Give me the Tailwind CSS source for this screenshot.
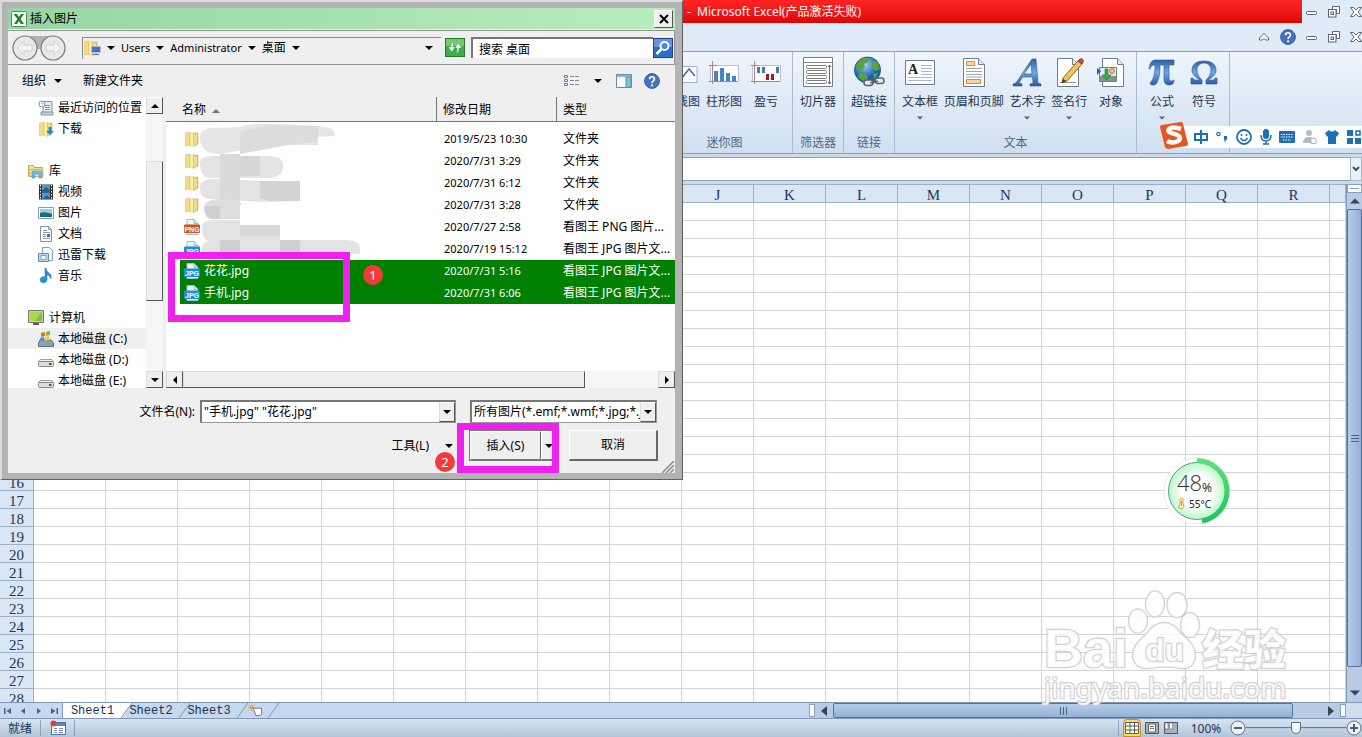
<!DOCTYPE html>
<html lang="zh-CN">
<head>
<meta charset="utf-8">
<meta name="viewport" content="width=device-width, initial-scale=1">
<title>Microsoft Excel</title>
<script src="https://cdn.jsdelivr.net/npm/@tailwindcss/browser@4"></script>
</head>
<body class="h-screen overflow-hidden bg-white font-['Noto_Sans','Noto_Sans_CJK_SC',sans-serif] text-xs leading-4 text-black">

<!-- Shared icon symbols -->
<svg class="absolute size-0">
  <defs>
    <linearGradient id="gold" x1="0" x2="1"><stop offset="0" stop-color="#f9eaa0"/><stop offset="1" stop-color="#dcb844"/></linearGradient>
    <linearGradient id="blueGlyph" x1="0" y1="0" x2="0" y2="1"><stop offset="0" stop-color="#2d5fa8"/><stop offset=".5" stop-color="#6fa8e6"/><stop offset="1" stop-color="#2c5ca3"/></linearGradient>
    <linearGradient id="ring" x1="0" y1="0" x2="0" y2="1"><stop offset="0" stop-color="#5fe07c"/><stop offset="1" stop-color="#1fc45a"/></linearGradient>
    <radialGradient id="gaugeFill"><stop offset=".55" stop-color="#ffffff"/><stop offset="1" stop-color="#b9f6c6"/></radialGradient>
    <radialGradient id="globe" cx=".4" cy=".3"><stop offset="0" stop-color="#9fd4f7"/><stop offset="1" stop-color="#1c5fae"/></radialGradient>
  </defs>
  <symbol id="caret" viewBox="0 0 8 4"><path d="M0 0h8L4 4z" fill="currentColor"/></symbol>
  <symbol id="folder" viewBox="0 0 16 16"><path d="M1.500 2 6 1v13l-4.500 1z" fill="#f2dc85" stroke="#d8bb5c" stroke-width=".5"/><path d="M6 2.500 9.500 1.500v13L6 15z" fill="#fdf0ae" stroke="#d8bb5c" stroke-width=".5"/><path d="M9.500 2H14v11l-4.500 2.500z" fill="url(#gold)" stroke="#c9a640" stroke-width=".5"/><path d="M12 4h1v8h-1z" fill="#f8e79c"/></symbol>
  <symbol id="png" viewBox="0 0 16 16"><path d="M3 .5h7l4 4v11H3z" fill="#eef6fc" stroke="#9cbdd6"/><path d="M10 .5v4h4" fill="#cfe3f2" stroke="#9cbdd6"/><rect y="5.500" width="16" height="8.500" rx="1" fill="#c9571f"/><text x="8" y="13" text-anchor="middle" font-family="Liberation Sans" font-weight="bold" font-size="7" fill="#fff">PNG</text></symbol>
  <symbol id="jpg" viewBox="0 0 16 16"><path d="M3 .5h7l4 4v11H3z" fill="#eef6fc" stroke="#9cbdd6"/><path d="M10 .5v4h4" fill="#cfe3f2" stroke="#9cbdd6"/><rect y="5.500" width="16" height="8.500" rx="1" fill="#1c8ed6"/><text x="8" y="13" text-anchor="middle" font-family="Liberation Sans" font-weight="bold" font-size="7" fill="#fff">JPG</text></symbol>
  <symbol id="drive" viewBox="0 0 16 16"><path d="M2 7.500h12l1.500 2.500H.5z" fill="#f2f2f2" stroke="#a0a0a0"/><rect x=".5" y="9.500" width="15" height="5" rx="1" fill="#d9dbdc" stroke="#8a8a8a"/><path d="M11 11h2.500v2H11z" fill="#4b5b4b"/></symbol>
  <symbol id="min" viewBox="0 0 12 12"><rect x=".5" y="5.500" width="10" height="3" rx="1" fill="#fff" stroke="#5b6573"/></symbol>
  <symbol id="restore" viewBox="0 0 12 12"><path d="M4.500.5h7v7h-3v-4h-4z" fill="#fff" stroke="#5b6573"/><rect x=".5" y="3.500" width="7.500" height="7.500" fill="#fff" stroke="#5b6573"/><rect x="3" y="6" width="2.500" height="2.500" fill="#fff" stroke="#5b6573"/></symbol>
  <symbol id="close" viewBox="0 0 12 12"><path d="M.5 1.500h3L6 4l2.500-2.500h3L8 6l3.500 4.500h-3L6 8l-2.500 2.500h-3L4 6z" fill="#fff" stroke="#5b6573"/></symbol>
  <symbol id="help" viewBox="0 0 16 16"><circle cx="8" cy="8" r="7.400" fill="#4173c4" stroke="#3a5f9f"/><path d="M5.600 6.200C5.600 3 10.600 3 10.400 6c0 1.800-2.300 1.900-2.300 4" fill="none" stroke="#fff" stroke-width="1.700"/><circle cx="8.100" cy="12.300" r="1.100" fill="#fff"/></symbol>
</svg>

<div class="flex h-screen min-w-0 flex-col bg-[#dfebf7] text-[#1c3557]">

  <!-- Title bar -->
  <header class="flex h-[23px] shrink-0">
    <div class="flex flex-1 items-center bg-linear-to-b from-[#ff2424] to-[#e00404] pl-[687px] text-white">-&nbsp; Microsoft Excel(产品激活失败)</div>
    <div class="flex w-[60px] items-center justify-end gap-2.5">
      <button aria-label="最小化"><svg class="size-3"><use href="#min"/></svg></button>
      <button aria-label="还原"><svg class="size-3"><use href="#restore"/></svg></button>
      <button aria-label="关闭"><svg class="size-3"><use href="#close"/></svg></button>
    </div>
  </header>

  <!-- Workbook controls -->
  <div class="flex h-7 shrink-0 items-center justify-end gap-2.5">
    <button aria-label="折叠功能区"><svg class="size-3" viewBox="0 0 12 12"><path d="M1.500 7 6 2.500 10.500 7v2h-3L6 7.500 4.500 9h-3z" fill="#fff" stroke="#5b6573"/></svg></button>
    <button aria-label="帮助"><svg class="size-4"><use href="#help"/></svg></button>
    <button aria-label="最小化工作簿"><svg class="size-3"><use href="#min"/></svg></button>
    <button aria-label="还原工作簿"><svg class="size-3"><use href="#restore"/></svg></button>
    <button aria-label="关闭工作簿"><svg class="size-3"><use href="#close"/></svg></button>
  </div>

  <!-- Ribbon -->
  <nav class="flex h-[103px] shrink-0 border-y border-[#8ba0bc] bg-linear-to-b from-[#eef5fc] via-[#dfeaf6] to-[#d0dfef] pl-[649px]">
    <section class="flex w-36 flex-col justify-between border-r border-[#a9bcd3] pb-0.5 pl-3">
      <div class="flex">
        <button class="flex w-[42px] flex-col items-center pt-1"><svg class="size-8" viewBox="0 0 32 32"><path d="M1 10.500h30v16H1z" fill="#fff" stroke="#9fb0c4"/><path d="m2 22 8-8 6 8 7-9 6 7" fill="none" stroke="#3c6ea9" stroke-width="1.500"/></svg><span class="mt-1.5 whitespace-nowrap">折线图</span></button>
        <button class="flex w-[42px] flex-col items-center pt-1"><svg class="size-8" viewBox="0 0 32 32"><path d="M2.500 9.500h28v16h-28z" fill="#fff" stroke="#b8c4d2"/><path d="M4.500 5v23M1 25.500h29M1 9.500h8" stroke="#b57f86" fill="none"/><path d="M6 15h4v10H6zM12 12h4v13h-4zM18 17h4v8h-4zM24 20h4v5h-4z" fill="#4384cf"/></svg><span class="mt-1.5">柱形图</span></button>
        <button class="flex w-[42px] flex-col items-center pt-1"><svg class="size-8" viewBox="0 0 32 32"><path d="M2.500 9.500h28v16h-28z" fill="#fff" stroke="#b8c4d2"/><path d="M4.500 5v23M1 25.500h29M1 9.500h8" stroke="#b57f86" fill="none"/><path d="M7 11h3v6H7zM12 11h3v6h-3zM26 11h3v6h-3z" fill="#3f7fae"/><path d="M16 18h3v6h-3zM21 18h3v6h-3z" fill="#a3182e"/></svg><span class="mt-1.5">盈亏</span></button>
      </div>
      <h2 class="pr-1 text-center text-[#4e6788]">迷你图</h2>
    </section>
    <section class="flex w-[51px] flex-col justify-between border-r border-[#a9bcd3] pb-0.5">
      <button class="flex flex-col items-center pt-1"><svg class="size-8" viewBox="0 0 32 32"><path d="M1.500 1.500h29v29h-29z" fill="#fff" stroke="#7d7d7d"/><path d="M2 6.500h28" stroke="#888"/><g fill="#fff" stroke="#7d7d7d"><rect x="4.500" y="9.500" width="20" height="3" rx="1"/><rect x="4.500" y="14.500" width="20" height="3" rx="1"/><rect x="4.500" y="19.500" width="20" height="3" rx="1"/><rect x="4.500" y="24.500" width="20" height="3" rx="1"/></g><path d="M27.500 9v19m-1.500-17 1.500-2 1.500 2m-3 15 1.500 2 1.500-2" fill="none" stroke="#666"/></svg><span class="mt-1.5">切片器</span></button>
      <h2 class="text-center text-[#4e6788]">筛选器</h2>
    </section>
    <section class="flex w-[51px] flex-col justify-between border-r border-[#a9bcd3] pb-0.5">
      <button class="flex flex-col items-center pt-1"><svg class="size-8" viewBox="0 0 32 32"><circle cx="14.500" cy="14" r="13" fill="url(#globe)" stroke="#2a5c93"/><path d="M4 8C8 2 14 1 16 2l-1 4-4 2 1 3-4 4-5-2zM19 5l6 1 2 7-4 2-4-4zM6 17l7 1 2 4-4 4-6-5zM20 18l5-1-3 7z" fill="#55a539"/><g fill="#e8ebee" stroke="#5b6067" stroke-width="1.500"><rect x="11" y="24" width="9" height="5.500" rx="2.700"/><rect x="22" y="22" width="9" height="5.500" rx="2.700"/><path d="m17 27 8-2"/></g></svg><span class="mt-1.5">超链接</span></button>
      <h2 class="text-center text-[#4e6788]">链接</h2>
    </section>
    <section class="flex w-[242px] flex-col justify-between border-r border-[#a9bcd3] px-1 pb-0.5">
      <div class="flex">
        <button class="flex w-[42px] flex-col items-center pt-1"><svg class="size-8" viewBox="0 0 32 32"><path d="M1.500 4.500h29v24h-29z" fill="#fff" stroke="#6f7c8c"/><text x="4" y="18" font-family="Liberation Serif" font-weight="bold" font-size="14" fill="#222">A</text><path d="M17 9.500h11M17 12.500h11M17 15.500h11M17 18.500h11M4 21.500h24M4 24.500h24" stroke="#a8b7d8"/></svg><span class="mt-1.5">文本框</span><svg class="mt-1.5 h-1 w-1.5 text-[#51617a]"><use href="#caret"/></svg></button>
        <button class="flex w-[66px] flex-col items-center pt-1"><svg class="size-8" viewBox="0 0 32 32"><path d="M5.500 2.500h15l6 6v22h-21z" fill="#fff" stroke="#6f7c8c"/><path d="M20.500 2.500v6h6" fill="#e3e8ef" stroke="#6f7c8c"/><path d="M8.500 5.500h8v4h-8zM8.500 23.500h14v4h-14z" fill="#fbd3a0" stroke="#dd8a2f"/><path d="M8 12.500h16M8 15.500h16M8 18.500h16M8 21h16" stroke="#9aa6b4"/></svg><span class="mt-1.5 whitespace-nowrap">页眉和页脚</span></button>
        <button class="flex w-[42px] flex-col items-center pt-1"><svg class="size-8" viewBox="0 0 32 32"><path d="M2 30v-2l3-1L21 3h4l2 24 3 1v2H19v-2l3-1-.5-6h-10L8 27l3 1v2zM13 18h8L20 8z" fill="url(#blueGlyph)" stroke="#2a5591" stroke-width=".6"/></svg><span class="mt-1.5">艺术字</span><svg class="mt-1.5 h-1 w-1.5 text-[#51617a]"><use href="#caret"/></svg></button>
        <button class="flex w-[42px] flex-col items-center pt-1"><svg class="size-8" viewBox="0 0 32 32"><path d="M4.500 2.500h15l6 6v22h-21z" fill="#fff" stroke="#6f7c8c"/><path d="M19.500 2.500v6h6" fill="#e3e8ef" stroke="#6f7c8c"/><path d="M7 26.500h16" stroke="#999"/><path d="m10 22 15-17 4 3-15 17-5 2z" fill="#f3c45a" stroke="#8c6418"/><path d="m25 5 2-2c2-1 4 1 3 3l-1 2z" fill="#cf4f4f" stroke="#8f3434"/><path d="m9 27 1-4 3 2z" fill="#333"/></svg><span class="mt-1.5">签名行</span><svg class="mt-1.5 h-1 w-1.5 text-[#51617a]"><use href="#caret"/></svg></button>
        <button class="flex w-[42px] flex-col items-center pt-1"><svg class="size-8" viewBox="0 0 32 32"><path d="M7.500 2.500h15l6 6v22h-21z" fill="#fff" stroke="#6f7c8c"/><path d="M22.500 2.500v6h6" fill="#e3e8ef" stroke="#6f7c8c"/><path d="M4.500 11.500h17v14h-17z" fill="#dfe8f2" stroke="#6f7c8c"/><path d="M5 20h16v5H5z" fill="#7d9c86"/><circle cx="17" cy="15" r="2.500" fill="#f0c083" stroke="#b98744"/><path d="M10 13h3v6h3l-4.500 5L7 19h3z" fill="#39ab3c" stroke="#237a2a" stroke-width=".6"/><path d="m2 12 4 3-4 4z" fill="#3a56b0"/></svg><span class="mt-1.5">对象</span></button>
      </div>
      <h2 class="text-center text-[#4e6788]">文本</h2>
    </section>
    <section class="flex w-[93px] border-r border-[#a9bcd3] px-1">
      <button class="flex w-[42px] flex-col items-center pt-1"><svg class="size-8" viewBox="0 0 32 32"><path d="M3 13C4 6 6 4 10 4h18v5h-5v13c0 3 2 4 5 2 0 4-2 5-5 5-4 0-5-3-5-6V9h-4c0 9-1 15-4 19-2 2-6 1-6-1 4-4 5-10 5-18-3 0-4 1-5 4z" fill="url(#blueGlyph)" stroke="#2a5591" stroke-width=".6"/></svg><span class="mt-1.5">公式</span><svg class="mt-1.5 h-1 w-1.5 text-[#51617a]"><use href="#caret"/></svg></button>
      <button class="flex w-[42px] flex-col items-center pt-1"><svg class="size-8" viewBox="0 0 32 32"><path d="M3 28v-6h2l1 2h6c-5-3-8-6-8-10C4 8 9 5 16 5s12 3 12 9c0 4-3 7-8 10h6l1-2h2v6H18v-4c3-3 5-6 5-10 0-4-3-7-7-7s-7 3-7 7c0 4 2 7 5 10v4z" fill="url(#blueGlyph)" stroke="#2a5591" stroke-width=".6"/></svg><span class="mt-1.5">符号</span></button>
    </section>
  </nav>

  <!-- Formula bar -->
  <div class="flex h-[30px] shrink-0 bg-[#cddaea] pt-[3px] pb-[3px]">
    <input aria-label="编辑栏" class="min-w-0 flex-1 border-y border-[#8ba0bc] bg-white outline-none">
    <button aria-label="展开编辑栏" class="flex w-3 items-center justify-center border border-[#a5b5ca] bg-[#e9f0f8]"><svg class="h-2 w-2" viewBox="0 0 8 8"><path d="m1 2 3 3 3-3" fill="none" stroke="#41546f" stroke-width="2"/></svg></button>
  </div>

  <!-- Worksheet -->
  <div class="flex min-h-0 flex-1">
    <div class="min-w-0 flex-1 overflow-hidden bg-white">
      <table class="w-full table-fixed border-separate border-spacing-0 font-['Liberation_Serif','Noto_Sans_CJK_SC',serif] text-[15px] leading-[14px]">
        <thead><tr id="columns" class="h-[19px]"></tr></thead>
        <tbody id="rows"></tbody>
      </table>
    </div>
    <div class="flex w-4 shrink-0 flex-col border-l border-[#7f97b8] bg-[#b9cce4]">
      <div class="flex h-[9px] items-center border border-[#8ba0bc] bg-white px-0.5"><div class="h-px w-full bg-[#8ba0bc]"></div></div>
      <button aria-label="向上滚动" class="flex h-4 items-center justify-center"><svg class="h-1.5 w-2.5 rotate-180 text-[#33445f]"><use href="#caret"/></svg></button>
      <div class="flex flex-1 flex-col items-center justify-center gap-0.5 rounded-xs border border-[#55709a] bg-linear-to-r from-[#b6cde8] to-[#93b1d7]">
        <div class="h-px w-2 bg-[#4c6180]"></div><div class="h-px w-2 bg-[#4c6180]"></div><div class="h-px w-2 bg-[#4c6180]"></div>
      </div>
      <button aria-label="向下滚动" class="flex h-[35px] items-end justify-center pb-1.5"><svg class="h-1.5 w-2.5 text-[#33445f]"><use href="#caret"/></svg></button>
    </div>
  </div>

  <!-- Sheet tabs and horizontal scroll bar -->
  <div class="flex h-[17px] shrink-0 border-t border-b border-[#7f97b8] bg-[#c6d9ee]">
    <div class="flex w-[63px] items-center justify-around border-r border-[#7f97b8] text-[#4d6283]">
      <button aria-label="第一个工作表"><svg class="size-2" viewBox="0 0 8 8"><path d="M0 1h1.500v6H0zM7 1v6L2.500 4z" fill="currentColor"/></svg></button>
      <button aria-label="上一个工作表"><svg class="size-2" viewBox="0 0 8 8"><path d="M6 1v6L2 4z" fill="currentColor"/></svg></button>
      <button aria-label="下一个工作表"><svg class="size-2" viewBox="0 0 8 8"><path d="M2 1v6l4-3z" fill="currentColor"/></svg></button>
      <button aria-label="最后一个工作表"><svg class="size-2" viewBox="0 0 8 8"><path d="M1 1v6l4.500-3zM6.500 1H8v6H6.500z" fill="currentColor"/></svg></button>
    </div>
    <div class="flex flex-1 font-['Liberation_Mono',monospace] text-xs leading-[13px]">
      <button class="w-[57px] bg-white pt-0.5 pl-0.5 text-center">Sheet1</button>
      <svg class="h-[15px] w-3" viewBox="0 0 12 15"><path d="M0 0h12L2 15H0z" fill="#fff"/><path d="M12 0 1 15" stroke="#7f97b8" fill="none"/></svg>
      <button class="-ml-1 w-[50px] pt-0.5 pr-1 text-center">Sheet2</button>
      <svg class="h-[15px] w-3" viewBox="0 0 12 15"><path d="M12 0 1 15" stroke="#7f97b8" fill="none"/></svg>
      <button class="-ml-1 w-[50px] pt-0.5 pr-1 text-center">Sheet3</button>
      <svg class="h-[15px] w-3" viewBox="0 0 12 15"><path d="M12 0 1 15" stroke="#7f97b8" fill="none"/></svg>
      <button aria-label="插入工作表"><svg class="size-[15px]" viewBox="0 0 16 16"><path d="M5.500 5.500h9v6l-2 2h-4z" fill="#fff" stroke="#5d7396"/><path d="M4 1v8M0 5h8M1 2l6 6M7 2 1 8" stroke="#d8a12c"/></svg></button>
      <svg class="ml-1 h-[15px] w-3" viewBox="0 0 12 15"><path d="M12 0 1 15" stroke="#7f97b8" fill="none"/></svg>
    </div>
    <div class="flex w-[537px] shrink-0 bg-[#b9cce4]">
      <div class="my-px w-1.5 border border-[#8ba0bc] bg-white"></div>
      <button aria-label="向左滚动" class="flex w-[18px] items-center justify-center"><svg class="h-2.5 w-1.5" viewBox="0 0 6 10"><path d="M6 0v10L0 5z" fill="#33445f"/></svg></button>
      <div class="flex w-[460px] items-center justify-center gap-0.5 rounded-xs border border-[#55709a] bg-linear-to-b from-[#b6cde8] to-[#93b1d7]">
        <div class="h-2 w-px bg-[#4c6180]"></div><div class="h-2 w-px bg-[#4c6180]"></div><div class="h-2 w-px bg-[#4c6180]"></div>
      </div>
      <button aria-label="向右滚动" class="flex flex-1 items-center justify-end pr-1.5"><svg class="h-2.5 w-1.5" viewBox="0 0 6 10"><path d="M0 0v10l6-5z" fill="#33445f"/></svg></button>
      <div class="my-px w-1.5 border border-[#8ba0bc] bg-white"></div>
    </div>
    <div class="w-4 bg-[#cfdff0]"></div>
  </div>

  <!-- Status bar -->
  <footer class="flex h-[18px] shrink-0 items-center bg-linear-to-b from-[#d8e4f2] to-[#b2c4da]">
    <span class="pt-px pl-2">就绪</span>
    <div class="ml-2 flex h-4 w-[35px] items-center justify-center border-x border-[#8fa3be]">
      <button aria-label="录制宏"><svg class="size-4" viewBox="0 0 16 16"><rect x="1.500" y="2.500" width="14" height="12" fill="#fff" stroke="#5373a8"/><path d="M2 3h13v3H2z" fill="#5b86c8"/><path d="M4 8.500h3M9 8.500h4M4 10.500h3M9 10.500h4M4 12.500h3M9 12.500h4" stroke="#7c93b8"/><circle cx="3.500" cy="3.500" r="3" fill="#d1463b"/></svg></button>
    </div>
    <div class="ml-auto flex h-full items-center">
      <div class="mr-1 h-4 w-px bg-[#8fa3be]"></div>
      <button aria-label="普通视图" class="flex h-[18px] w-[18px] items-center justify-center rounded-t-sm border border-[#c48f1e] bg-[#ffd969]"><svg class="h-3 w-3.5" viewBox="0 0 14 12"><path d="M.5.5h13v11H.5zM.5 4h13M.5 8h13M5 .5v11M9.500.5v11" fill="#fff" stroke="#5c5c5c"/></svg></button>
      <button aria-label="页面布局" class="ml-1"><svg class="h-3 w-3.5" viewBox="0 0 14 12"><path d="M.5.5h13v11H.5z" fill="#a9b0b8" stroke="#555"/><path d="M3.500 2h7v8h-7z" fill="#fff" stroke="#666"/><path d="M5 4.500h4M5 6.500h4" stroke="#777"/></svg></button>
      <button aria-label="分页预览" class="ml-[5px]"><svg class="h-3 w-3.5" viewBox="0 0 14 12"><path d="M.5.5h13v11H.5z" fill="#a9b0b8" stroke="#555"/><path d="M1 1h3v6H1zM5.500 1h3v6h-3z" fill="#fff" stroke="#666" stroke-width=".6"/></svg></button>
      <button class="ml-3 w-8 pt-px text-center">100%</button>
      <button aria-label="缩小" class="ml-2"><svg class="size-4" viewBox="0 0 16 16"><circle cx="8" cy="8" r="7" fill="#edf2f8" stroke="#5b6f8c"/><path d="M4 8h8" stroke="#4b5c75" stroke-width="2"/></svg></button>
      <input type="range" min="0" max="100" value="50" aria-label="显示比例" class="h-4 w-[100px] appearance-none bg-linear-to-b from-transparent from-[45%] via-[#5b6f8c] via-[46%] to-transparent to-[54%] [&::-webkit-slider-thumb]:h-3 [&::-webkit-slider-thumb]:w-2.5 [&::-webkit-slider-thumb]:appearance-none [&::-webkit-slider-thumb]:rounded-b-full [&::-webkit-slider-thumb]:border [&::-webkit-slider-thumb]:border-[#5b6f8c] [&::-webkit-slider-thumb]:bg-[#f3f7fb]">
      <button aria-label="放大"><svg class="size-4" viewBox="0 0 16 16"><circle cx="8" cy="8" r="7" fill="#edf2f8" stroke="#5b6f8c"/><path d="M4 8h8M8 4v8" stroke="#4b5c75" stroke-width="2"/></svg></button>
    </div>
  </footer>
</div>

<!-- Insert-picture dialog -->
<div role="dialog" aria-label="插入图片" class="absolute top-0 left-0 flex h-[480px] w-[683px] flex-col border-t-2 border-r border-b border-l-2 border-t-[#dadada] border-r-[#5f5f5f] border-b-[#5f5f5f] border-l-[#dadada] bg-[#b3b3b3] pt-1.5 pr-[7px] pb-1.5 pl-1.5">
  <div class="flex min-h-0 flex-1 flex-col bg-[#efefef]">
    <div class="flex h-[21px] shrink-0 items-center bg-linear-to-r from-[#97d5a2] to-[#b8edbd] pr-0.5 pl-[3px]">
      <svg class="size-4" viewBox="0 0 16 16"><rect x=".5" y=".5" width="15" height="15" rx="1" fill="#f4fbf4" stroke="#4f9158"/><path d="M2.500 3h3.300L8 6l2-3h3L9.500 8l3.500 5H9.800L8 10l-2 3H3l3.500-5z" fill="#267a35"/></svg>
      <h1 class="ml-[3px] flex-1">插入图片</h1>
      <button aria-label="关闭" class="flex h-[18px] w-[19px] items-center justify-center border border-t-white border-r-[#555] border-b-[#555] border-l-white bg-[#efefef]"><svg class="size-2.5" viewBox="0 0 10 10"><path d="m1 1 8 8M9 1 1 9" stroke="#000" stroke-width="2"/></svg></button>
    </div>

    <!-- Address row -->
    <div class="mt-px flex h-[35px] shrink-0 items-center border border-l-0 border-[#949494] pr-px pl-1">
      <svg class="h-7 w-[54px]" viewBox="0 0 54 28"><path d="M12 2h30v8q-6 5-15 5T12 10z" fill="#b4b4b4"/><g fill="#e9e9e9" stroke="#7c7c7c" stroke-width="1.200"><circle cx="13" cy="14" r="12"/><circle cx="41" cy="14" r="12"/></g><g fill="#f4f4f4" stroke="#cfcfcf"><path d="m5 14 7-7v4h8v6h-8v4z"/><path d="m49 14-7-7v4h-8v6h8v4z"/></g></svg>
      <div class="ml-4 flex h-[22px] min-w-0 flex-1 items-center border-t border-l border-[#8a8a8a] pr-2">
        <span class="flex w-[18px] shrink-0 items-center"><svg class="size-4 shrink-0"><use href="#folder"/></svg><svg class="-ml-2 mt-1.5 size-2.5 shrink-0" viewBox="0 0 10 10"><path d="M.5.5h9v6h-9z" fill="#3c78c8" stroke="#aebbd0"/><path d="M2 8.500h6" stroke="#5c6f90"/></svg></span>
        <svg class="ml-1.5 h-1 w-2"><use href="#caret"/></svg><span class="ml-1.5 text-[11px]">Users</span>
        <svg class="ml-1.5 h-1 w-2"><use href="#caret"/></svg><span class="ml-1.5 text-[11px]">Administrator</span>
        <svg class="ml-1.5 h-1 w-2"><use href="#caret"/></svg><span class="ml-1.5">桌面</span>
        <svg class="ml-1.5 h-1 w-2"><use href="#caret"/></svg>
        <button aria-label="历史路径" class="ml-auto"><svg class="h-1 w-2"><use href="#caret"/></svg></button>
      </div>
      <button aria-label="刷新" class="ml-1"><svg class="h-[19px] w-5" viewBox="0 0 20 19"><rect x=".5" y=".5" width="19" height="18" fill="#3fae46" stroke="#267a2d"/><path d="M1 1h18v7H1z" fill="#74cb6f"/><path d="M9 4Q6 4 6 9H3l4 5 3-5H8Q7.500 6 9 4zM11 15q3 0 3-5h3l-4-5-3 5h2q.5 3-1 5z" fill="#fff" stroke="#2c8a34" stroke-width=".4"/></svg></button>
      <input aria-label="搜索" value="搜索 桌面" class="ml-1.5 h-[21px] w-[182px] border-t-2 border-l-2 border-t-[#777] border-l-[#777] bg-white pl-1.5 outline-none">
      <button aria-label="开始搜索"><svg class="h-5 w-5" viewBox="0 0 20 20"><rect x=".5" y=".5" width="19" height="19" fill="#2c6fc9" stroke="#1d3f8f"/><path d="M1 1h18v8H1z" fill="#6f93e0"/><circle cx="11.500" cy="8" r="4" fill="#4c86dc" stroke="#fff" stroke-width="2"/><path d="m8.500 11-5 5" stroke="#fff" stroke-width="2.500"/></svg></button>
    </div>

    <!-- Command row -->
    <div class="flex h-8 shrink-0 items-center pr-[15px] pl-3.5">
      <button class="flex items-center">组织<svg class="ml-2 h-1 w-2"><use href="#caret"/></svg></button>
      <button class="ml-[21px]">新建文件夹</button>
      <button aria-label="更改视图" class="ml-auto flex items-center gap-3.5"><svg class="h-3 w-4" viewBox="0 0 16 12"><path d="M.5.5h3v2h-3zM.5 4.500h3v2h-3zM.5 8.500h3v2h-3z" fill="#fff" stroke="#6e7d94"/><path d="M6 1.500h4M11 1.500h4M6 5.500h4M11 5.500h4M6 9.500h4M11 9.500h4" stroke="#7e899b"/></svg><svg class="h-1 w-2"><use href="#caret"/></svg></button>
      <button aria-label="预览窗格" class="ml-3.5"><svg class="h-3.5 w-4" viewBox="0 0 16 14"><path d="M.5.5h15v13H.5z" fill="#fff" stroke="#6391ac"/><path d="M1 1h14v2H1z" fill="#8ebbd0"/><path d="M10 3h5v10h-5z" fill="#7cc1dd" stroke="#6391ac"/></svg></button>
      <button aria-label="获取帮助" class="ml-3"><svg class="size-4"><use href="#help"/></svg></button>
    </div>

    <!-- Folder tree and file list -->
    <div class="flex h-[291px] shrink-0">
      <div class="min-w-0 flex-1 overflow-hidden bg-white">
        <ul class="leading-[21px]">
          <li class="flex h-[21px] items-center pl-[30px] whitespace-nowrap"><svg class="mr-1 size-4" viewBox="0 0 16 16"><path d="M5 1.500h9v11H5z" fill="#e3ebf0" stroke="#8497a3"/><path d="M3 12h12v3H3z" fill="#c5d0d6" stroke="#8497a3"/><path d="M7 5.500h5M7 7.500h5M7 9.500h5" stroke="#7f98a8"/><circle cx="4" cy="4" r="3" fill="#fff" stroke="#8497a3"/><path d="M4 2.500V4h1.500" fill="none" stroke="#8497a3"/></svg>最近访问的位置</li>
          <li class="flex h-[21px] items-center pl-[30px]"><svg class="size-4"><use href="#folder"/></svg><svg class="-ml-2 mt-1 mr-1 size-2" viewBox="0 0 8 8"><path d="M2.500 0h3v4H8L4 8 0 4h2.500z" fill="#2388cc"/></svg>下载</li>
          <li class="mt-[21px] flex h-[21px] items-center pl-5"><svg class="mr-[5px] size-4" viewBox="0 0 16 16"><path d="M.5 2.500h5l1 2h8v9H.5z" fill="#f7e08a" stroke="#c9a94b"/><path d="M2 6.500h13v7H2z" fill="#fbeebb" stroke="#d3b65a"/><path d="M4 15V9q0-1 1-1h8q1 0 1 1v6h-3v-4H7v4z" fill="#64bfe3" stroke="#3f8db0" stroke-width=".6"/></svg>库</li>
          <li class="flex h-[21px] items-center pl-[30px]"><svg class="mr-1 size-4" viewBox="0 0 16 16"><path d="M1 .5h14v15H1z" fill="#2c3138"/><path d="M4 1h8v6.500H4zM4 8.500h8V15H4z" fill="#4c9ad1"/><path d="m4 7 4-4 4 3v1.500H4zM4 15l5-4 3 3v1z" fill="#2a5d8c"/><path d="M2.500 1v14M13.500 1v14" stroke="#fff" stroke-dasharray="1.500 1.500"/></svg>视频</li>
          <li class="flex h-[21px] items-center pl-[30px]"><svg class="mr-1 size-4" viewBox="0 0 16 16"><path d="M.5 2.500h15v11H.5z" fill="#fff" stroke="#8d9cab"/><path d="M2 4h12v8H2z" fill="#8fd2ea"/><path d="M2 8q5-2 12 1v3H2z" fill="#1d6a78"/></svg>图片</li>
          <li class="flex h-[21px] items-center pl-[30px]"><svg class="mr-1 size-4" viewBox="0 0 16 16"><path d="M2.500.5h8l3 3v12h-11z" fill="#fff" stroke="#8494a4"/><path d="M10.500.5v3h3" fill="none" stroke="#8494a4"/><path d="M5 4.500h4M5 6.500h7M5 8.500h3M5 10.500h3M5 12.500h7" stroke="#8ba0b8"/><path d="M9 8h3v3H9z" fill="#3d6da3"/></svg>文档</li>
          <li class="flex h-[21px] items-center pl-[30px]"><svg class="mr-1 size-4" viewBox="0 0 16 16"><path d="M4.500.5h7l3 3v10h-10z" fill="#f3f9fd" stroke="#7ba2bf"/><path d="M.5 6.500h10v8H.5z" fill="#b5d8ee" stroke="#5f91b4"/><path d="M3 8.500h5v4H3z" fill="#fff" stroke="#79a9c8"/></svg>迅雷下载</li>
          <li class="flex h-[21px] items-center pl-[30px]"><svg class="mr-1 size-4" viewBox="0 0 16 16"><path d="M8 0q0 3 3 5t2 6q-1-4-4-4v5a3.500 3 0 1 1-2-3V0z" fill="#2991d3" stroke="#1c6fa8" stroke-width=".5"/></svg>音乐</li>
          <li class="mt-[21px] flex h-[21px] items-center pl-5"><svg class="mr-[5px] size-4" viewBox="0 0 16 16"><path d="M.5.5h15v12H.5z" fill="#c8cdd0" stroke="#777"/><path d="M2 2h12v9H2z" fill="#84c225"/><path d="M2 2h12l-7 9H2z" fill="#a9da4b"/><path d="M5 13h6v2H5z" fill="#8a4a58"/></svg>计算机</li>
          <li class="flex h-[21px] items-center bg-[#efefef] pl-[30px]"><svg class="mr-1 size-4" viewBox="0 0 16 16"><path d="M2 9h11l2.500 3v3.500H.5V12z" fill="#8aa4ad" stroke="#5b717a"/><path d="M3 2l4-1v4l-4 1z" fill="#ea6a2f"/><path d="M8 1l4-1v4L8 5z" fill="#85b83c"/><path d="M2 7l4-1v4H2z" fill="#4495d4"/><path d="M7 6l4-1v4l-4 1z" fill="#f4c837"/></svg>本地磁盘 (C:)</li>
          <li class="flex h-[21px] items-center pl-[30px]"><svg class="mr-1 size-4"><use href="#drive"/></svg>本地磁盘 (D:)</li>
          <li class="flex h-[21px] items-center pl-[30px]"><svg class="mr-1 size-4"><use href="#drive"/></svg>本地磁盘 (E:)</li>
        </ul>
      </div>
      <div class="flex w-[17px] shrink-0 flex-col bg-[#f6f6f6]">
        <button aria-label="向上" class="flex h-[17px] items-center justify-center border border-t-white border-r-[#555] border-b-[#555] border-l-[#ddd] bg-[#efefef]"><svg class="h-1 w-2 rotate-180"><use href="#caret"/></svg></button>
        <div class="mt-[47px] h-[140px] border border-t-[#ddd] border-r-[#555] border-b-[#555] border-l-[#ddd] bg-[#efefef]"></div>
        <button aria-label="向下" class="mt-auto flex h-[17px] items-center justify-center border border-t-[#ddd] border-r-[#555] border-b-[#555] border-l-[#ddd] bg-[#efefef]"><svg class="h-1 w-2"><use href="#caret"/></svg></button>
      </div>
      <div class="ml-[3px] flex w-[509px] shrink-0 flex-col bg-white">
        <table class="w-full table-fixed border-separate border-spacing-0 text-left">
          <thead>
            <tr class="h-[25px] bg-[#efefef]">
              <th class="w-[271px] border-r border-b border-[#777] pt-0.5 pl-4 font-normal">名称<svg class="ml-1.5 inline h-1 w-2 rotate-180 text-[#777]"><use href="#caret"/></svg></th>
              <th class="w-[120px] border-r border-b border-[#777] pt-0.5 pl-1.5 font-normal">修改日期</th>
              <th class="border-b border-[#777] pt-0.5 pl-1.5 font-normal">类型</th>
            </tr>
            <tr class="h-1.5"><td colspan="3"></td></tr>
          </thead>
          <tbody id="files"></tbody>
        </table>
        <div class="mt-auto flex h-[17px] bg-[#f6f6f6]">
          <button aria-label="向左" class="flex w-[17px] items-center justify-center border border-t-[#ddd] border-r-[#555] border-b-[#555] border-l-[#ddd] bg-[#efefef]"><svg class="h-2 w-1" viewBox="0 0 4 8"><path d="M4 0v8L0 4z"/></svg></button>
          <div class="w-[402px] border border-t-[#ddd] border-r-[#555] border-b-[#555] border-l-[#ddd] bg-[#efefef]"></div>
          <button aria-label="向右" class="ml-auto flex w-[17px] items-center justify-center border border-t-[#ddd] border-r-[#555] border-b-[#555] border-l-[#ddd] bg-[#efefef]"><svg class="h-2 w-1" viewBox="0 0 4 8"><path d="M0 0v8l4-4z"/></svg></button>
        </div>
      </div>
    </div>

    <!-- File name and actions -->
    <div class="mt-3 flex h-[23px] shrink-0 items-center pr-[18px]">
      <label for="fname" class="w-[192px] pr-[5px] text-right">文件名(N):</label>
      <div class="flex h-full w-64 border border-t-2 border-l-2 border-t-[#777] border-r-[#999] border-b-[#999] border-l-[#777] bg-white">
        <input id="fname" value='"手机.jpg" "花花.jpg"' class="min-w-0 flex-1 pl-0.5 outline-none">
        <button aria-label="文件名列表" class="flex w-4 items-center justify-center border border-t-white border-r-[#555] border-b-[#555] border-l-[#ddd] bg-[#efefef]"><svg class="h-1 w-2"><use href="#caret"/></svg></button>
      </div>
      <div class="ml-auto grid h-full w-[187px] border border-t-2 border-l-2 border-t-[#777] border-r-[#999] border-b-[#999] border-l-[#777] bg-white">
        <select aria-label="文件类型" class="col-start-1 row-start-1 w-[168px] appearance-none overflow-hidden pl-0.5 outline-none"><option>所有图片(*.emf;*.wmf;*.jpg;*.jpeg;*.jfif)</option></select>
        <span class="pointer-events-none col-start-1 row-start-1 flex w-4 items-center justify-center justify-self-end border border-t-white border-r-[#555] border-b-[#555] border-l-[#ddd] bg-[#efefef]"><svg class="h-1 w-2"><use href="#caret"/></svg></span>
      </div>
    </div>
    <div class="mt-[7px] flex h-[31px] shrink-0 items-center justify-end pr-[17px]">
      <button class="flex items-center">工具(L)<svg class="ml-4 h-1 w-2"><use href="#caret"/></svg></button>
      <div class="ml-4 flex h-full border border-[#777] bg-[#efefef]">
        <button class="w-[71px] border border-t-white border-r-[#666] border-b-[#777] border-l-white">插入(S)</button>
        <button aria-label="插入选项" class="flex w-[15px] items-center justify-center border border-t-white border-r-0 border-b-[#777] border-l-white"><svg class="h-1 w-2"><use href="#caret"/></svg></button>
      </div>
      <button class="ml-3 h-full w-[89px] border-t border-r-2 border-b-2 border-l border-t-white border-r-[#666] border-b-[#666] border-l-white">取消</button>
    </div>
    <svg class="mt-auto mr-px size-3 shrink-0 self-end" viewBox="0 0 12 12"><path d="M0 12 12 0M4 12l8-8M8 12l4-4" stroke="#8a8a8a" stroke-width="1.500"/></svg>
  </div>
</div>

<!-- Blurred-out file names -->
<svg class="absolute top-[124px] left-[198px] h-[130px] w-[164px]" viewBox="0 0 164 130">
  <path d="M2 14q0-12 18-10l20-1q20-5 40-3l40 2q18 1 17 10l-17 1v8H80l-18 2-40 7Q2 30 2 14z" fill="#e6e6e6"/>
  <path d="M42 7 72 1l48 1v16l-30 3-48 9z" fill="#dcdcdc"/>
  <path d="M2 40q0-8 12-8h58q13 0 13 10t-12 12H14Q2 54 2 40z" fill="#e4e4e4"/>
  <path d="M22 32h40v20H22z" fill="#d6d6d8"/>
  <path d="M2 64q0-9 14-9l46 2h40v20l-36 1-50-3Q2 76 2 64z" fill="#e3e3e3"/>
  <path d="M62 57h40v20H72l-10-3z" fill="#d3d3d3"/>
  <path d="M22 30h20v60H22z" fill="#dadadb"/>
  <path d="M6 84q0-8 14-9h12q10 1 12 6h-2v14H12q-6-2-6-11z" fill="#dedede"/>
  <path d="M6 82h16v13h-8q-8-3-8-13z" fill="#cfcfcf"/>
  <path d="M4 104q0-8 12-8h26v5h40v17H14q-10-1-10-14z" fill="#e3e3e3"/>
  <path d="M42 101h40v11H42z" fill="#d9d9d9"/>
  <path d="M4 123q2-7 14-7h130q13 0 14 8v6H4z" fill="#e3e3e3"/>
  <path d="M22 116h20v14H22zM82 116h20v14H82z" fill="#cfcfcf"/>
</svg>

<!-- Step annotations -->
<div class="absolute top-[252px] left-[168px] h-[70px] w-[182px] border-7 border-[#f020f0]"></div>
<div class="absolute top-[423px] left-[457px] h-[50px] w-[102px] border-7 border-[#f020f0]"></div>
<div class="absolute top-[265px] left-[363px] flex size-5 items-center justify-center rounded-full bg-[#f23a3a] text-[13px] text-white">1</div>
<div class="absolute top-[452px] left-[435px] flex size-5 items-center justify-center rounded-full bg-[#f23a3a] text-[13px] text-white">2</div>

<!-- Input-method bar -->
<div class="absolute top-[126px] right-0 flex h-[22px] w-[190px] items-center justify-between bg-white pr-px pl-[22px] text-[#1d70b8]">
  <svg class="absolute -top-1 -left-3 h-7 w-7" viewBox="0 0 28 28"><path d="M0 5q0-2 2-2l19-3q2 0 2 2l5 20q0 2-2 2L8 27q-2 0-3-2z" fill="#e9541f"/><path d="M21 7q-9-3-12 0c-4 5 11 4 11 9 0 4-8 6-13 3" fill="none" stroke="#fff" stroke-width="4.500"/></svg>
  <svg class="h-4 w-3.5" viewBox="0 0 14 16"><path d="M1 5h12v6H1zM7 1v14" fill="none" stroke="currentColor" stroke-width="2"/></svg>
  <svg class="h-3 w-3" viewBox="0 0 12 12"><circle cx="2.500" cy="3" r="1.700" fill="none" stroke="currentColor" stroke-width="1.200"/><path d="M8 5h3q1 4-3 6 1-2 0-3z" fill="currentColor"/></svg>
  <svg class="size-4" viewBox="0 0 16 16"><circle cx="8" cy="8" r="7" fill="none" stroke="currentColor" stroke-width="1.800"/><path d="M5.500 5v2M10.500 5v2M4.500 9q3.500 5 7 0" fill="none" stroke="currentColor" stroke-width="1.500"/></svg>
  <svg class="h-4 w-3" viewBox="0 0 12 16"><rect x="3" width="6" height="10" rx="3" fill="currentColor"/><path d="M1 6q0 6 5 6t5-6M6 12v3M3 15h6" fill="none" stroke="currentColor" stroke-width="1.500"/></svg>
  <svg class="h-3 w-4" viewBox="0 0 16 12"><rect width="16" height="12" rx="1" fill="currentColor"/><path d="M2 3.500h12M2 6h12M4 9h8" stroke="#fff" stroke-dasharray="1.500 1"/></svg>
  <svg class="h-4 w-3.5" viewBox="0 0 14 16"><circle cx="6" cy="4" r="3" fill="#b5bbc2"/><path d="M0 14q0-6 6-6 3 0 4 1v5z" fill="#b5bbc2"/><path d="M8 9.500h5v5H8z" fill="#fff" stroke="#b5bbc2"/></svg>
  <svg class="h-4 w-3.5" viewBox="0 0 14 16"><path d="M4 1q3 3 6 0l4 3-2 4-1-1v8H3V7L2 8 0 4z" fill="currentColor"/></svg>
  <svg class="size-3.5" viewBox="0 0 14 14"><path d="M0 0h6v6H0zM0 8h6v6H0zM8 8h6v6H8z" fill="currentColor"/><path d="M9 1h4v4H9z" fill="none" stroke="currentColor" stroke-width="1.500"/></svg>
</div>

<!-- System load gauge -->
<svg class="absolute top-[456px] right-[130px] h-[70px] w-[70px]" viewBox="0 0 70 70">
  <circle cx="35" cy="35" r="33" fill="#fff" stroke="#ececec"/>
  <circle cx="35" cy="35" r="28.500" fill="url(#gaugeFill)" stroke="#4aa878"/>
  <path d="M35 4.500A30.500 30.500 0 0 1 40 65" fill="none" stroke="url(#ring)" stroke-width="5"/>
  <text x="15" y="35" font-family="Open Sans, Noto Sans" font-weight="300" font-size="22" fill="#333">48</text>
  <text x="40" y="36" font-family="Noto Sans" font-size="12" fill="#333">%</text>
  <path d="M18 43q2-2 3 0v5q2 2 0 4-2 1-4 0-1-2 1-4z" fill="#fff" stroke="#e89b1c"/><path d="M19.500 45v5" stroke="#e89b1c" stroke-width="1.500"/>
  <text x="27" y="52" font-family="Noto Sans" font-size="10" fill="#222">55°C</text>
</svg>

<!-- Watermark -->
<svg class="absolute right-[66px] bottom-[26px] h-[124px] w-[256px]" viewBox="0 0 256 124" fill="#fff" fill-opacity=".85" stroke="#c8c8c8" stroke-opacity=".8" paint-order="stroke">
  <g font-family="Liberation Sans" font-weight="bold" stroke-width="2.500">
    <text x="4" y="80" font-size="54">Bai</text>
    <text x="162" y="78" font-family="Noto Sans CJK SC" font-weight="900" font-size="42">经验</text>
  </g>
  <g stroke-width="2.500">
    <ellipse cx="98" cy="34" rx="9" ry="11.500"/><ellipse cx="115" cy="17" rx="9" ry="12.500"/><ellipse cx="137" cy="18" rx="9.500" ry="12"/><ellipse cx="150" cy="38" rx="9" ry="12"/>
    <path d="M124 36q10 0 17 11 14 11 14 21-1 14-14 13-17-3-32 0-14 1-16-12 0-11 13-21 8-12 18-12z"/>
  </g>
  <text x="105" y="74" font-family="Liberation Sans" font-weight="bold" font-size="32" stroke-width="2.500">du</text>
  <text x="4" y="111" font-family="Noto Sans" font-size="28" stroke-width="2.500">jingyan.baidu.com</text>
</svg>

<script>
  // Column headings and rows of the worksheet; those under the dialog stay blank.
  const letters = [...'         JKLMNOPQR', ''];
  document.getElementById('columns').innerHTML =
    '<th class="w-[34px] border-y border-r border-[#9eb0c8] bg-[#d9e6f4]"></th>' +
    letters.map((l, i) => `<th class="${i === 18 ? '' : 'w-[72px]'} border-y border-r border-[#9eb0c8] bg-[#d9e6f4] p-0 pt-[3px] font-normal">${l.trim()}</th>`).join('');
  let body = '';
  for (let r = 1; r <= 28; r++) {
    body += `<tr class="h-[18px]"><th class="h-[18px] border-r border-b border-[#9eb0c8] bg-[#d9e6f4] p-0 pt-[3px] font-normal">${r > 15 ? r : ''}</th>` +
      letters.map(() => '<td class="border-r border-b border-[#d4d4d4] p-0"></td>').join('') + '</tr>';
  }
  document.getElementById('rows').innerHTML = body;

  const files = [
    ['folder', '', '2019/5/23 10:30', '文件夹'],
    ['folder', '', '2020/7/31 3:29', '文件夹'],
    ['folder', '', '2020/7/31 6:12', '文件夹'],
    ['folder', '', '2020/7/31 3:28', '文件夹'],
    ['png', '', '2020/7/27 2:58', '看图王 PNG 图片...'],
    ['jpg', '', '2020/7/19 15:12', '看图王 JPG 图片文...'],
    ['jpg', '花花.jpg', '2020/7/31 5:16', '看图王 JPG 图片文...'],
    ['jpg', '手机.jpg', '2020/7/31 6:06', '看图王 JPG 图片文...'],
  ];
  document.getElementById('files').innerHTML = files.map(([icon, name, date, type]) => {
    const fill = name ? 'bg-[#008000]' : '';
    return `<tr class="h-[22px] ${name ? 'text-white' : ''}">
      <td class="p-0 pl-3.5"><div class="flex h-[22px] items-center gap-1 pl-1 ${fill}"><svg class="size-4"><use href="#${icon}"/></svg>${name}</div></td>
      <td class="p-0 pl-[7px] text-[11px] whitespace-nowrap ${fill}">${date}</td>
      <td class="p-0 pl-1.5 whitespace-nowrap ${fill}">${type}</td></tr>`;
  }).join('');
</script>
</body>
</html>
